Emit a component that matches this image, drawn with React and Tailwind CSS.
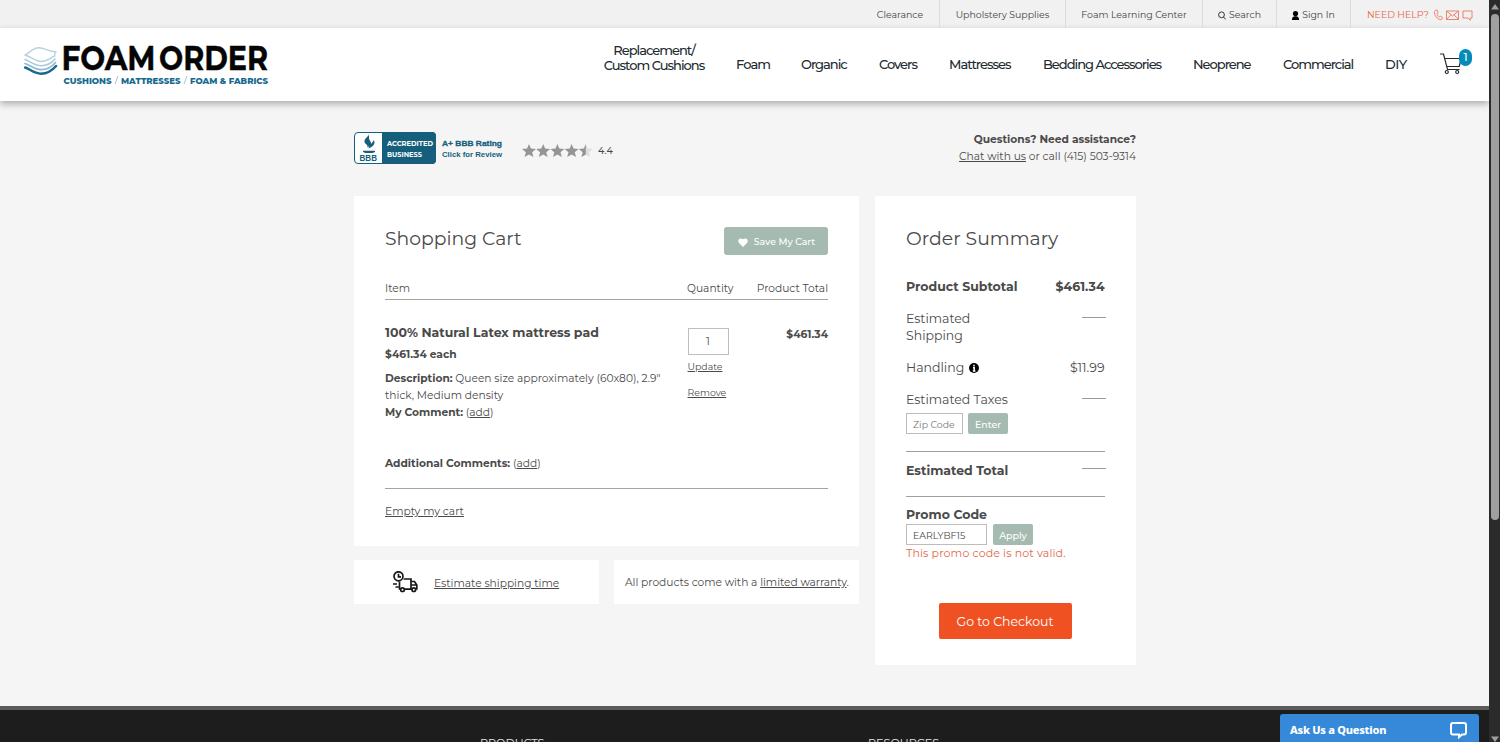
import React from "react";

const star = "M7 0l1.9 4.6 5.1.4-3.9 3.2 1.3 4.9L7 10.4l-4.400 2.700 1.300-4.900L0 5l5.100-.4z";

function Logo() {
  return (
    <svg width="248" height="44" viewBox="0 0 248 44" className="block">
      <g fill="none" strokeLinejoin="round" strokeLinecap="round">
        <path d="M1.200 24.500C6 26 10 30.500 17 30.700c7 0 11-3 15-7.700" stroke="#15698f" strokeWidth="2.500" />
        <path d="M1 20.500C6 22 10 26.500 17 26.700c7 0 11-3 14.500-7.200" stroke="#8fb9cf" strokeWidth="1.700" />
        <path d="M1 16.500C6 18 10 22.500 17 22.700c7 0 11-3 14-6.700" stroke="#a9cadb" strokeWidth="1.500" />
        <path d="M.9 12C5.500 10.500 8 4.800 15 4.800c6 0 9 3.900 17 4-1.700 1.700-1.500 3-1.300 4.200-4 1.500-7 5.300-13.200 5.500C10.500 18.500 6.500 13 .9 12z" fill="#fff" stroke="#b9d2df" strokeWidth="1.500" />
      </g>
      <g fontFamily="Montserrat, Lato, sans-serif" fontWeight="700" fontSize="35" fill="#050505" stroke="#050505" strokeWidth=".4">
        <text x="37.500" y="26.800" textLength="94" lengthAdjust="spacingAndGlyphs">FOAM</text>
        <text x="135" y="26.800" textLength="109" lengthAdjust="spacingAndGlyphs">ORDER</text>
      </g>
      <g fontFamily="Montserrat, Lato, sans-serif" fontWeight="800" fontSize="8" fill="#15698f">
        <text x="39.500" y="40.600" textLength="48" lengthAdjust="spacingAndGlyphs">CUSHIONS</text>
        <text x="97" y="40.600" textLength="59.500" lengthAdjust="spacingAndGlyphs">MATTRESSES</text>
        <text x="166" y="40.600" textLength="78" lengthAdjust="spacingAndGlyphs">FOAM &amp; FABRICS</text>
      </g>
      <path d="M91 41l3-8M160 41l3-8" stroke="#a3c5d8" strokeWidth="1" />
    </svg>
  );
}

function Header() {
  return (
    <header className="relative">
      <div className="flex h-7 justify-end bg-[#f1f1f1] text-[9.4px] leading-[30px] whitespace-nowrap text-[#444]">
        <div className="flex w-[79px] justify-center border-r border-[#dcdcdf]">Clearance</div>
        <div className="flex w-[126px] justify-center border-r border-[#dcdcdf]">Upholstery Supplies</div>
        <div className="flex w-[137px] justify-center border-r border-[#dcdcdf]">Foam Learning Center</div>
        <div className="flex w-[74px] justify-center gap-[3px] border-r border-[#dcdcdf]">
          <svg className="mt-[11px]" width="8" height="9" viewBox="0 0 8 9" fill="none" stroke="#333"><circle cx="3.500" cy="3.800" r="2.900" /><path d="M5.500 6l2.300 2.500" /></svg>
          Search
        </div>
        <div className="flex w-[74px] justify-center gap-[3px] border-r border-[#dcdcdf]">
          <svg className="mt-[11px]" width="7" height="9" viewBox="0 0 7 9" fill="#000"><circle cx="3.500" cy="2.600" r="2.600" /><path d="M0 9V7.500Q.5 5.500 2.500 5.300h2Q6.500 5.500 7 7.500V9z" /></svg>
          Sign In
        </div>
        <div className="flex w-[138px] pl-4 text-[#e8674d]">
          <span className="w-[62px]">NEED HELP?</span>
          <svg className="mt-[9px] ml-[4px]" width="41" height="12" viewBox="0 0 41 12" fill="none" stroke="#ed7761" strokeWidth=".9">
            <path d="M2.800 1 1.500 2.400c-.5 4 3 8 6.300 8.300L9.500 9.500l-.2-1.200-2-1-1.100.8C4.800 7 4.100 5.500 4 4.600l1-.8-.6-2.500z" />
            <path d="M13.500 2h12v8.500h-12zM13.500 2l6 5 6-5M13.500 10.500l4.500-4.800M25.500 10.500l-4.500-4.800" />
            <path d="M30 2h9v7h-1.700v2.200L35 9h-5z" />
          </svg>
        </div>
      </div>
      <div className="flex h-[73px] bg-white pt-4 pl-6 shadow-[0_3px_7px_rgba(0,0,0,0.3)]">
        <div className="-mt-px w-[579px]"><Logo /></div>
        <nav className="flex gap-[31px] pt-[13px] text-[13px] leading-[15px] font-medium tracking-[-1px] whitespace-nowrap text-[#222a30]">
          <a className="-mt-[14px] flex w-[102px] flex-col items-center"><span>Replacement/</span><span>Custom Cushions</span></a>
          <a className="w-[34px] tracking-[-0.9px]">Foam</a>
          <a className="w-[47px]">Organic</a>
          <a className="w-[39px]">Covers</a>
          <a className="w-[63px]">Mattresses</a>
          <a className="w-[119px]">Bedding Accessories</a>
          <a className="w-[58px]">Neoprene</a>
          <a className="ml-px w-[71px]">Commercial</a>
          <a className="w-[23px] tracking-[-0.400px]">DIY</a>
        </nav>
        <div className="relative ml-[32px] h-9 w-9 pt-[9px]">
          <svg width="22" height="22" viewBox="0 0 22 22" fill="none" stroke="#252a30" strokeWidth="1.200"><path d="M0 1h3.500l4 15.500h12M4.600 5.500h16.500l-1.800 8H6.700" /><circle cx="6.800" cy="19" r="1.500" /><circle cx="17.200" cy="19" r="1.500" /></svg>
          <span className="absolute top-[5px] left-[19px] flex h-[17px] w-[13px] items-center justify-center rounded-full bg-[#038bb9] text-[11px] font-medium text-white">1</span>
        </div>
      </div>
    </header>
  );
}

function Trust() {
  return (
    <div className="flex h-[64px] items-start justify-between whitespace-nowrap">
      <div className="flex items-center">
        <svg width="156" height="32" viewBox="0 0 156 32" className="block">
          <rect x=".5" y=".5" width="81" height="31" rx="3.500" fill="#fff" stroke="#155f7f" strokeWidth="1" />
          <path d="M28 0h50q4 0 4 4v24q0 4-4 4H28z" fill="#155f7c" />
          <path d="M15 2.500c-1 2.500-5 4-4.500 7.500.5 2.200 4 2.800 2.800 5.500 3.200-1.500 5-4.200 2.700-6.700-1.500-1.800-.8-4.300-1-6.300zM19.500 8c-.2 3-4.200 4-5 8.500 3-1.200 5.500-3 6-5.500.2-1.400-.4-2-1-3zM9 18.700h12v1.200l-2.500 1.100h-7L9 19.900z" fill="#155f7c" />
          <g fontFamily="Montserrat, sans-serif" fontWeight="700" fill="#155f7c">
            <text x="5.500" y="28.800" fontSize="8.500" fontFamily="Liberation Sans, Arial, sans-serif" textLength="17.500" lengthAdjust="spacingAndGlyphs">BBB</text>
            <text x="33" y="14.300" fontSize="7.300" fill="#fff" textLength="46" lengthAdjust="spacingAndGlyphs">ACCREDITED</text>
            <text x="33" y="24.600" fontSize="7.300" fill="#fff" textLength="35" lengthAdjust="spacingAndGlyphs">BUSINESS</text>
            <g fontFamily="Liberation Sans, Arial, sans-serif">
              <text x="88" y="14.300" fontSize="8" stroke="#155f7c" strokeWidth=".3" textLength="60" lengthAdjust="spacingAndGlyphs">A+ BBB Rating</text>
              <text x="88" y="24.600" fontSize="8" textLength="60" lengthAdjust="spacingAndGlyphs">Click for Review</text>
            </g>
          </g>
        </svg>
        <svg className="mt-[5px] ml-[12px]" width="71" height="14" viewBox="0 0 71 14" fill="#959595">
          <path d={star} /><path d={star} transform="translate(14.200 0)" /><path d={star} transform="translate(28.400 0)" /><path d={star} transform="translate(42.600 0)" />
          <path d={star} transform="translate(56.800 0)" fill="#dedede" />
          <path d="M63.800 0v10.400l-4.400 2.700 1.300-4.900L56.800 5l5.100-.4z" />
        </svg>
        <span className="mt-[7px] ml-[5px] text-[9.4px] font-medium">4.4</span>
      </div>
      <div className="-mt-[2px] text-right text-[10.67px] leading-[17px]">
        <div className="pt-[0.5px] font-bold">Questions? Need assistance?</div>
        <div><a className="underline">Chat with us</a> or call (415) 503-9314</div>
      </div>
    </div>
  );
}

function Cart() {
  return (
    <section className="h-[350px] bg-white px-[31px] pt-[31px] whitespace-nowrap">
      <div className="flex h-7 items-start justify-between">
        <h1 className="text-[18.8px] leading-[24px]">Shopping Cart</h1>
        <button className="flex h-7 w-[104px] items-center justify-center gap-[6px] rounded-[3px] bg-[#a5bbb2] pt-[2px] pl-px text-[9.4px] font-medium text-white">
          <svg width="10" height="9" viewBox="0 0 10 9" fill="#fff"><path d="M5 9 .8 4.800C-.9 2 1.800-1.200 5 1.300 8.200-1.200 10.900 2 9.200 4.800z" /></svg>
          Save My Cart
        </button>
      </div>
      <div className="mt-[24px] flex h-[21px] border-b border-[#a3a3a3] text-[10.67px] leading-[20px]">
        <span className="w-[302px]">Item</span><span className="w-[58px]">Quantity</span><span className="flex-1 text-right">Product Total</span>
      </div>
      <div className="flex h-[189px] border-b border-[#a3a3a3] pt-[24px]">
        <div className="w-[303px] text-[10.67px] leading-[17px]">
          <div className="text-[12.5px] leading-[18px] font-bold">100% Natural Latex mattress pad</div>
          <div className="mt-[4px] font-bold">$461.34 each</div>
          <div className="mt-[7px]"><b>Description:</b> Queen size approximately (60x80), 2.9"<br />thick, Medium density</div>
          <div><b>My Comment:</b> (<a className="underline">add</a>)</div>
          <div className="mt-[34px]"><b>Additional Comments:</b> (<a className="underline">add</a>)</div>
        </div>
        <div className="-ml-px flex w-[60px] flex-col items-start pt-[4px] text-[9.4px]">
          <span className="ml-px flex h-[27px] w-[41px] items-center justify-center border border-[#bdbdbd] pt-px pr-px text-[10.67px]">1</span>
          <a className="mt-[5px] ml-[0.5px] leading-[14px] underline">Update</a>
          <a className="mt-[12px] ml-[0.5px] leading-[14px] underline">Remove</a>
        </div>
        <span className="flex-1 pt-[3px] text-right text-[10.67px] font-bold">$461.34</span>
      </div>
      <a className="mt-[15px] block text-[10.67px] leading-[15px] underline">Empty my cart</a>
    </section>
  );
}

function TruckIcon() {
  return (
    <svg width="26" height="22" viewBox="0 0 26 22" fill="none" stroke="#171717" strokeWidth="1.700">
      <circle cx="5.500" cy="5.300" r="4.500" /><path d="M5.500 2.800v3H8M10.500 8h7.500v10M6.500 10.500V18H8M18 10.500h3.500l2.300 3.500V18h-1M18.500 14h5M0 13h4M2.500 16h3M11 18.200h8" />
      <circle cx="9.500" cy="18.700" r="1.800" /><circle cx="20.800" cy="18.700" r="1.800" />
    </svg>
  );
}

function Summary() {
  return (
    <aside className="h-[469px] w-[261px] bg-white pt-[31px] pr-[31.500px] pl-[31px] text-[12.5px] leading-[17px] whitespace-nowrap">
      <h2 className="text-[18.8px] leading-[24px]">Order Summary</h2>
      <div className="mt-[27px] flex justify-between font-bold"><span>Product Subtotal</span><span>$461.34</span></div>
      <div className="mt-[15px] flex justify-between"><span>Estimated<br />Shipping</span><i className="-mr-px mt-[7px] h-px w-6 bg-[#9a9a9a]" /></div>
      <div className="mt-[15px] flex justify-between">
        <span className="flex items-center gap-[5px]">Handling
          <svg width="10" height="10" viewBox="0 0 10 10"><circle cx="5" cy="5" r="5" fill="#000" /><path d="M5 1.800v1.700M4 4.800h1.200V8M3.800 8h2.600" stroke="#fff" strokeWidth="1.500" /></svg>
        </span>
        <span>$11.99</span>
      </div>
      <div className="mt-[15px] flex justify-between"><span>Estimated Taxes</span><i className="-mr-px mt-[7px] h-px w-6 bg-[#9a9a9a]" /></div>
      <div className="mt-[5px] flex gap-[6px] text-[9.4px]">
        <span className="flex h-[21px] w-[57px] items-center border border-[#bdbdbd] pt-[2px] pl-[6px] text-[#777]">Zip Code</span>
        <span className="-ml-px flex h-[21px] w-[40px] items-center justify-center rounded-[2px] bg-[#a5bbb2] pt-[2px] font-medium text-white">Enter</span>
      </div>
      <div className="mt-[17px] flex h-[46px] justify-between border-y border-[#a0a0a0] pt-[10px]"><b>Estimated Total</b><i className="-mr-px mt-[6px] h-px w-6 bg-[#9a9a9a]" /></div>
      <div className="mt-[9px] font-bold">Promo Code</div>
      <div className="mt-[1px] flex gap-[6px] text-[9.4px]">
        <span className="flex h-[21px] w-[81px] items-center border border-[#bdbdbd] pt-[2px] pl-[6px]">EARLYBF15</span>
        <span className="flex h-[21px] w-[40px] items-center justify-center rounded-[2px] bg-[#a5bbb2] pt-[2px] font-medium text-white">Apply</span>
      </div>
      <div className="text-[11px] tracking-[0.130px] text-[#e0694a]">This promo code is not valid.</div>
      <button className="mt-[41px] ml-[32.500px] h-[36px] w-[133px] rounded-[2px] bg-[#f05123] text-[12.5px] text-white">Go to Checkout</button>
    </aside>
  );
}

export default function App() {
  return (
    <div className="relative flex h-[742px] w-[1500px] overflow-hidden bg-[#f5f5f5] font-['Montserrat','Inter',sans-serif] text-[#4a4a4a]">
      <div className="flex w-[1489px] flex-col overflow-hidden">
        <Header />
        <main className="ml-[354px] h-[605px] w-[782px] shrink-0 pt-[31px]">
          <Trust />
          <div className="flex gap-4">
            <div className="w-[505px]">
              <Cart />
              <div className="mt-[14px] flex gap-[15px] text-[10.67px] whitespace-nowrap">
                <div className="flex h-[44px] w-[245px] items-center bg-white pl-[39px]"><TruckIcon /><a className="mt-[3px] ml-[15px] underline">Estimate shipping time</a></div>
                <div className="flex h-[44px] w-[245px] items-center bg-white pl-[11px]"><span className="mt-px tracking-[-0.02px]">All products come with a <a className="underline">limited warranty</a>.</span></div>
              </div>
            </div>
            <Summary />
          </div>
        </main>
        <footer className="flex h-9 shrink-0 border-t-4 border-[#5b5b5b] bg-[#1d1d1d] pt-[25px] text-[11.2px] text-[#e2e2e2]">
          <span className="ml-[480px] w-[388px]">PRODUCTS</span><span>RESOURCES</span>
        </footer>
      </div>
      <div className="flex w-[11px] flex-col items-center bg-[#2b2b2b]">
        <svg className="mt-1" width="8" height="6" viewBox="0 0 8 6" fill="#9f9f9f"><path d="M4 0l4 5.500H0z" /></svg>
        <div className="mt-1 h-[506px] w-2 rounded-full bg-[#9f9f9f]" />
        <svg className="mt-auto" width="8" height="6" viewBox="0 0 8 6" fill="#9f9f9f"><path d="M4 6L0 .5h8z" /></svg>
      </div>
      <div className="absolute bottom-0 left-[1280px] flex h-7 w-[199px] items-center justify-between rounded-t-[3px] bg-[#3689d8] pt-1 pr-3 pl-[10px] font-['Noto_Sans',sans-serif] text-[11px] font-extrabold text-white">
        <span className="tracking-[-0.250px]">Ask Us a Question</span>
        <svg width="17" height="17" viewBox="0 0 17 17" fill="none" stroke="#fff" strokeWidth="2"><path d="M3 1h11q2 0 2 2v7.500q0 2-2 2h-2l-3 2.700v-2.700H3q-2 0-2-2V3q0-2 2-2z" /></svg>
      </div>
    </div>
  );
}
